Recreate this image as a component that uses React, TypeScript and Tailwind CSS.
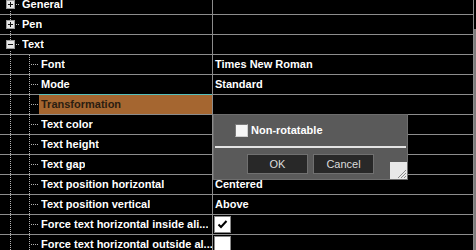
import React from "react";

const DOT = "#b4b4b4";

function vDots(x: number, from: number, to: number) {
  const r: React.ReactElement[] = [];
  for (let y = from; y <= to; y += 2) r.push(<rect key={`v${x}-${y}`} x={x} y={y} width={1} height={1} fill={DOT} />);
  return r;
}
function hDots(y: number, from: number, to: number) {
  const r: React.ReactElement[] = [];
  for (let x = from; x <= to; x += 2) r.push(<rect key={`h${y}-${x}`} x={x} y={y} width={1} height={1} fill={DOT} />);
  return r;
}

function TreeGlyph({ level, expander }: { level: 0 | 1; expander?: "plus" | "minus" }) {
  if (level === 0) {
    return (
      <svg width={20} height={19} className="shrink-0 block">
        {vDots(10, 0, 4)}
        {vDots(10, 16, 18)}
        <rect x={6.5} y={5.5} width={8} height={8} fill="#e6e6e6" stroke="#9c9c9c" />
        <rect x={8} y={9} width={5} height={1} fill="#111" />
        {expander === "plus" && <rect x={10} y={7} width={1} height={5} fill="#111" />}
        {hDots(9, 16, 19)}
      </svg>
    );
  }
  return (
    <svg width={39} height={19} className="shrink-0 block">
      {vDots(10, 0, 18)}
      {vDots(29, 0, 18)}
      {hDots(9, 31, 38)}
    </svg>
  );
}

function Check({ checked }: { checked?: boolean }) {
  return (
    <div className="flex h-[17px] w-[17px] items-center justify-center border border-[#8a8a8a] bg-white">
      {checked && (
        <svg width={11} height={11} viewBox="0 0 11 11">
          <path d="M1.5 5.5 L4 8 L9.5 2" fill="none" stroke="#000" strokeWidth={2} />
        </svg>
      )}
    </div>
  );
}

type Row = {
  label: string;
  level: 0 | 1;
  expander?: "plus" | "minus";
  value?: React.ReactNode;
  selected?: boolean;
};

const rows: Row[] = [
  { label: "General", level: 0, expander: "plus" },
  { label: "Pen", level: 0, expander: "plus" },
  { label: "Text", level: 0, expander: "minus" },
  { label: "Font", level: 1, value: "Times New Roman" },
  { label: "Mode", level: 1, value: "Standard" },
  { label: "Transformation", level: 1, selected: true },
  { label: "Text color", level: 1 },
  { label: "Text height", level: 1 },
  { label: "Text gap", level: 1 },
  { label: "Text position horizontal", level: 1, value: "Centered" },
  { label: "Text position vertical", level: 1, value: "Above" },
  { label: "Force text horizontal inside ali...", level: 1, value: <Check checked /> },
  { label: "Force text horizontal outside al...", level: 1, value: <Check /> },
];

export default function App() {
  return (
    <div className="relative h-[250px] w-[476px] overflow-hidden bg-black font-['Liberation_Sans',Arial,sans-serif] text-[11px] font-bold leading-[19px] text-white">
      <div className="flex h-full">
        <div className="w-[474px] border-r border-[#8c8c8c]">
          <div className="-mt-[5px] flex flex-col">
            {rows.map((r, i) => (
              <div key={i} className="flex h-[20px] shrink-0 border-b border-[#8c8c8c]">
                <div className="flex w-[212px] shrink-0 items-center">
                  <TreeGlyph level={r.level} expander={r.expander} />
                  {r.selected ? (
                    <div className="-mt-px flex h-[20px] flex-1 self-start items-center border-t border-[#58c0bc] bg-[#a56630] pl-[2px] text-[#2b1d10]">
                      <span className="leading-[19px]">{r.label}</span>
                    </div>
                  ) : (
                    <span className={`${r.level === 0 ? "ml-[2px]" : "ml-[2px]"} overflow-hidden whitespace-nowrap`}>{r.label}</span>
                  )}
                </div>
                <div className="w-px shrink-0 bg-[#8c8c8c]" />
                <div className="flex flex-1 items-center pl-[1px] whitespace-nowrap">
                  {typeof r.value === "string" ? <span className="pl-[1px]">{r.value}</span> : r.value}
                </div>
              </div>
            ))}
          </div>
        </div>
        <div className="flex w-[2px] flex-col">
          <div className="h-[29px]" />
          <div className="flex-1 bg-[#7c7c7c]" />
        </div>
      </div>

      <div className="absolute left-[213px] top-[114px] flex h-[66px] w-[195px] flex-col border border-[#6e6e6e] bg-[#5a5a5a]">
        <div className="flex items-center pl-[21px] pt-[8px]">
          <div className="h-[13px] w-[13px] border border-t-[#7a7a7a] border-l-[#7a7a7a] border-r-[#d0d0d0] border-b-[#d0d0d0] bg-[#f6f6f6]" />
          <span className="ml-[3px] leading-[14px] text-white">Non-rotatable</span>
        </div>
        <div className="mx-[1px] mt-[9px] h-[2px] bg-[#e4e4e4]" />
        <div className="flex flex-1 items-start">
          <div className="ml-[33px] mt-[6px] flex gap-[5px]">
            <button className="flex h-[20px] w-[61px] items-center justify-center border border-[#707070] bg-[#282828] font-normal text-[11px] text-[#dcdcdc]">
              OK
            </button>
            <button className="flex h-[20px] w-[61px] items-center justify-center border border-[#707070] bg-[#282828] font-normal text-[11px] text-[#dcdcdc]">
              Cancel
            </button>
          </div>
          <div className="ml-auto mr-[0px] self-end">
            <svg width={17} height={17} className="block">
              <rect x={0} y={0} width={17} height={17} fill="#e8e8e8" />
              <path d="M16 8 L8 16 M16 11 L11 16 M16 14 L14 16" stroke="#8a8a8a" strokeWidth={1} />
            </svg>
          </div>
        </div>
      </div>
    </div>
  );
}
